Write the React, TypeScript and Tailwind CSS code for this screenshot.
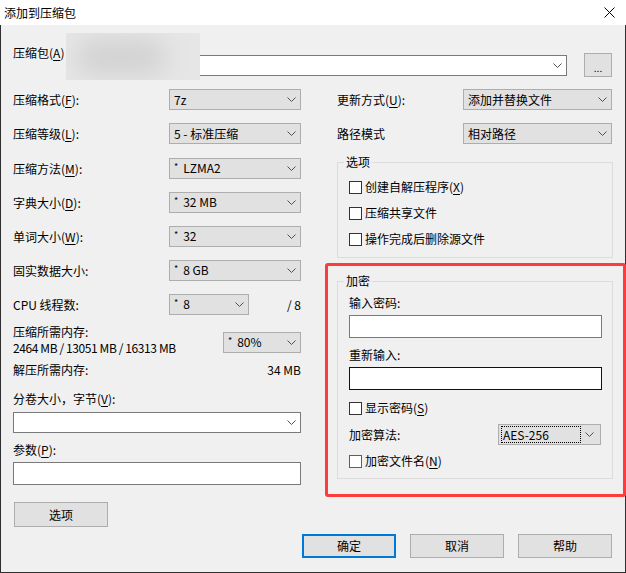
import React from "react";

const Chevron = () => (
  <svg width="9" height="5" viewBox="0 0 9 5" className="shrink-0">
    <path d="M0.5 0.5 L4.5 4.5 L8.5 0.5" fill="none" stroke="#505050" strokeWidth="1" />
  </svg>
);

function Combo({
  value,
  className,
  white,
}: {
  value?: React.ReactNode;
  className: string;
  white?: boolean;
}) {
  return (
    <div
      className={`flex h-[21px] items-center justify-between border pl-[4px] pr-[4px] ${
        white ? "border-[#7a7a7a] bg-white" : "border-[#adadad] bg-[#e1e1e1]"
      } ${className}`}
    >
      <span className="whitespace-nowrap">{value}</span>
      <Chevron />
    </div>
  );
}

function Star({ v }: { v: string }) {
  return (
    <span>
      <span className="relative -top-[3px] mr-[5px] text-[9px]">*</span>
      {v}
    </span>
  );
}

function Check({ label, focus }: { label: React.ReactNode; focus?: boolean }) {
  return (
    <div className="flex h-[16px] items-center gap-[3px]">
      <div
        className={`h-[13px] w-[13px] border bg-white ${focus ? "border-[#0078d7]" : "border-[#333333]"}`}
      />
      <span>{label}</span>
    </div>
  );
}

const U = ({ c }: { c: string }) => (
  <>
    (<u className="underline-offset-2">{c}</u>)
  </>
);

function Row({ label, children }: { label: React.ReactNode; children: React.ReactNode }) {
  return (
    <div className="flex h-[21px] items-center">
      <span className="w-[156px] shrink-0 whitespace-nowrap">{label}</span>
      {children}
    </div>
  );
}

function Btn({ children, primary, className }: { children: React.ReactNode; primary?: boolean; className: string }) {
  return (
    <div
      className={`flex items-center justify-center bg-[#e1e1e1] ${
        primary ? "border-2 border-[#0078d7]" : "border border-[#adadad]"
      } ${className}`}
    >
      {children}
    </div>
  );
}

export default function App() {
  return (
    <div className="flex h-[573px] w-[626px] flex-col bg-[#f0f0f0] font-['Microsoft_YaHei_UI','Noto_Sans_CJK_SC',sans-serif] text-[12px] leading-[16px] text-black">
      {/* title bar */}
      <div className="flex h-[25px] shrink-0 items-center justify-between bg-white pl-[4px] pr-[11px]">
        <span className="text-[12px]">添加到压缩包</span>
        <svg width="11" height="11" viewBox="0 0 11 11">
          <path d="M0.5 0.5 L10.5 10.5 M10.5 0.5 L0.5 10.5" stroke="#000" strokeWidth="1" />
        </svg>
      </div>

      <div className="relative flex flex-1 flex-col border-x border-b border-[#2f2f2f] pl-[12px] pr-[12px] pt-[28px]">
        {/* archive row */}
        <div className="flex h-[24px] items-start">
          <span className="-mt-[8px] w-[53px] shrink-0 whitespace-nowrap">
            压缩包<U c="A" />
          </span>
          <Combo className="mt-[2px] w-[501px]" white />
          <Btn className="ml-[17px] h-[24px] w-[28px] text-[10px] leading-[10px]">
            <span className="mt-[6px]">...</span>
          </Btn>
        </div>
        {/* blurred path */}
        <div className="absolute left-[65px] top-[8px] h-[47px] w-[134px] overflow-hidden bg-[#e6e6e6]">
          <div className="absolute left-[10px] top-[6px] h-[36px] w-[90px] rounded-full bg-[#d2d2d2] blur-[12px]" />
        </div>

        <div className="mt-[12px] flex gap-[36px]">
          {/* left column */}
          <div className="flex w-[288px] flex-col">
            <Row label={<>压缩格式<U c="F" />:</>}>
              <Combo className="w-[132px]" value="7z" />
            </Row>
            <div className="mt-[13px]">
              <Row label={<>压缩等级<U c="L" />:</>}>
                <Combo className="w-[132px]" value="5 - 标准压缩" />
              </Row>
            </div>
            <div className="mt-[14px]">
              <Row label={<>压缩方法<U c="M" />:</>}>
                <Combo className="w-[132px]" value={<Star v="LZMA2" />} />
              </Row>
            </div>
            <div className="mt-[13px]">
              <Row label={<>字典大小<U c="D" />:</>}>
                <Combo className="w-[132px]" value={<Star v="32 MB" />} />
              </Row>
            </div>
            <div className="mt-[13px]">
              <Row label={<>单词大小<U c="W" />:</>}>
                <Combo className="w-[132px]" value={<Star v="32" />} />
              </Row>
            </div>
            <div className="mt-[13px]">
              <Row label="固实数据大小:">
                <Combo className="w-[132px]" value={<Star v="8 GB" />} />
              </Row>
            </div>
            <div className="mt-[13px]">
              <Row label="CPU 线程数:">
                <Combo className="w-[80px]" value={<Star v="8" />} />
                <span className="ml-auto">/ 8</span>
              </Row>
            </div>
            <div className="mt-[9px] flex items-start justify-between">
              <div className="flex flex-col">
                <span>压缩所需内存:</span>
                <span className="tracking-[-0.4px]">2464 MB / 13051 MB / 16313 MB</span>
              </div>
              <Combo className="mt-[8px] w-[78px]" value={<Star v="80%" />} />
            </div>
            <div className="mt-[6px] flex justify-between">
              <span>解压所需内存:</span>
              <span>34 MB</span>
            </div>
            <span className="mt-[13px]">
              分卷大小，字节<U c="V" />:
            </span>
            <Combo className="mt-[5px] w-[288px]" white />
            <span className="mt-[9px]">
              参数<U c="P" />:
            </span>
            <div className="mt-[4px] h-[23px] w-[288px] border border-[#7a7a7a] bg-white" />
            <Btn className="ml-[1px] mt-[17px] h-[25px] w-[94px]">选项</Btn>
          </div>

          {/* right column */}
          <div className="flex w-[276px] flex-col">
            <div className="flex h-[21px] items-center">
              <span className="w-[126px] shrink-0">
                更新方式<U c="U" />:
              </span>
              <Combo className="w-[149px]" value="添加并替换文件" />
            </div>
            <div className="mt-[13px] flex h-[21px] items-center">
              <span className="w-[126px] shrink-0">路径模式</span>
              <Combo className="w-[149px]" value="相对路径" />
            </div>

            <fieldset className="mt-[10px] border border-[#dcdcdc] px-[11px] pb-[10px]">
              <legend className="-ml-[5px] px-[2px]">选项</legend>
              <div className="mt-[9px] flex flex-col gap-[10px]">
                <Check label={<>创建自解压程序<U c="X" /></>} />
                <Check label="压缩共享文件" />
                <Check label="操作完成后删除源文件" />
              </div>
            </fieldset>

            <div className="-ml-[12px] -mr-[13px] mt-[5px] rounded-[3px] border-[3px] border-[#ff3b3b] pb-[15px] pl-[9px] pr-[10px] pt-[7px]">
              <fieldset className="border border-[#dcdcdc] pb-[9px] pl-[11px] pr-[10px]">
                <legend className="-ml-[5px] px-[2px]">加密</legend>
                <div className="mt-[6px] flex flex-col">
                  <span>输入密码:</span>
                  <div className="mt-[4px] h-[23px] w-[253px] border border-[#7a7a7a] bg-white" />
                  <span className="mt-[9px]">重新输入:</span>
                  <div className="mt-[4px] h-[23px] w-[253px] border border-[#111111] bg-white" />
                  <div className="mt-[10px]">
                    <Check label={<>显示密码<U c="S" /></>} />
                  </div>
                  <div className="mt-[8px] flex h-[21px] items-center justify-between">
                    <span>加密算法:</span>
                    <div className="mr-[1px] flex h-[21px] w-[103px] items-center justify-between border border-[#adadad] bg-[#e1e1e1] pl-[2px] pr-[6px]">
                      <span className="flex h-[17px] w-[80px] items-center border border-dotted border-black pl-[1px]">
                        AES-256
                      </span>
                      <Chevron />
                    </div>
                  </div>
                  <div className="mt-[8px]">
                    <Check label={<>加密文件名<U c="N" /></>} focus />
                  </div>
                </div>
              </fieldset>
            </div>
          </div>
        </div>

        {/* bottom buttons */}
        <div className="mt-[7px] flex justify-end gap-[14px] pr-[1px]">
          <Btn primary className="h-[24px] w-[94px]">确定</Btn>
          <Btn className="h-[24px] w-[94px]">取消</Btn>
          <Btn className="h-[24px] w-[94px]">帮助</Btn>
        </div>
      </div>
    </div>
  );
}
